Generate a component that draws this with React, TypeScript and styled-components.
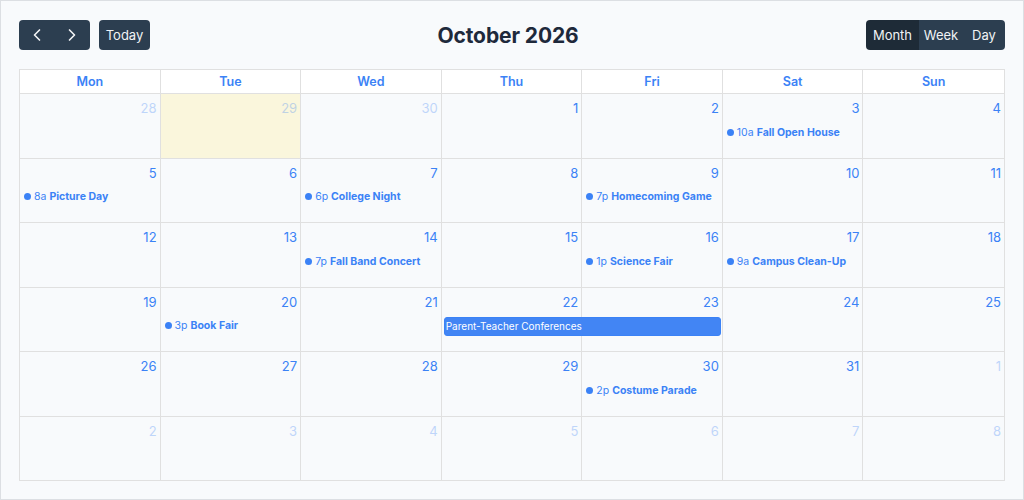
import styled, { createGlobalStyle } from 'styled-components';
import { ChevronLeft, ChevronRight } from 'lucide-react';

type CalEvent = {
  week: number;
  day: number;
  span?: number;
  time?: string;
  title: string;
};

const days = ['Mon', 'Tue', 'Wed', 'Thu', 'Fri', 'Sat', 'Sun'];

// first cell is Mon Sep 28 2026
const weeks: { n: number; other: boolean }[][] = Array.from({ length: 6 }, (_, w) =>
  Array.from({ length: 7 }, (_, d) => {
    const idx = w * 7 + d - 3;
    if (idx < 0) return { n: 28 + w * 7 + d, other: true };
    if (idx >= 31) return { n: idx - 30, other: true };
    return { n: idx + 1, other: false };
  })
);

const events: CalEvent[] = [
  { week: 0, day: 5, time: '10a', title: 'Fall Open House' },
  { week: 1, day: 0, time: '8a', title: 'Picture Day' },
  { week: 1, day: 2, time: '6p', title: 'College Night' },
  { week: 1, day: 4, time: '7p', title: 'Homecoming Game' },
  { week: 2, day: 2, time: '7p', title: 'Fall Band Concert' },
  { week: 2, day: 4, time: '1p', title: 'Science Fair' },
  { week: 2, day: 5, time: '9a', title: 'Campus Clean-Up' },
  { week: 3, day: 1, time: '3p', title: 'Book Fair' },
  { week: 3, day: 3, span: 2, title: 'Parent-Teacher Conferences' },
  { week: 4, day: 4, time: '2p', title: 'Costume Parade' },
];

const GlobalStyle = createGlobalStyle`
  html, body {
    margin: 0;
    padding: 0;
    background: #ffffff;
  }
  body {
    font-family: Inter, "Liberation Sans", sans-serif;
  }
`;

const App = () => {
  return (
    <>
      <GlobalStyle />
      <Page>
        <Toolbar>
          <ToolGroup>
            <ButtonGroup>
              <NavButton aria-label="prev">
                <ChevronLeft size={20} strokeWidth={2} />
              </NavButton>
              <NavButton aria-label="next">
                <ChevronRight size={20} strokeWidth={2} />
              </NavButton>
            </ButtonGroup>
            <TextButton>Today</TextButton>
          </ToolGroup>
          <Title>October 2026</Title>
          <ButtonGroup>
            <ViewButton $active $w={53}>Month</ViewButton>
            <ViewButton $w={44}>Week</ViewButton>
            <ViewButton $w={42}>Day</ViewButton>
          </ButtonGroup>
        </Toolbar>

        <Table>
          <HeaderRow>
            {days.map((d) => (
              <HeaderCell key={d}>{d}</HeaderCell>
            ))}
          </HeaderRow>
          {weeks.map((week, w) => (
            <WeekRow key={w}>
              {week.map((cell, d) => (
                <DayCell key={d} $col={d + 1} $today={w === 0 && d === 1}>
                  <DayNumber $other={cell.other}>{cell.n}</DayNumber>
                </DayCell>
              ))}
              {events
                .filter((e) => e.week === w)
                .map((e) =>
                  e.span ? (
                    <BlockEvent key={e.title} $col={e.day + 1} $span={e.span}>
                      {e.title}
                    </BlockEvent>
                  ) : (
                    <DotEvent key={e.title} $col={e.day + 1}>
                      <Dot />
                      <EventTime>{e.time}</EventTime>
                      <EventTitle>{e.title}</EventTitle>
                    </DotEvent>
                  )
                )}
            </WeekRow>
          ))}
        </Table>
      </Page>
    </>
  );
};

const Page = styled.div`
  box-sizing: border-box;
  width: 1024px;
  height: 500px;
  border: 1px solid #dcdfe3;
  background: #f8fafc;
  padding: 19px 18px 18px;
  display: flex;
  flex-direction: column;
  gap: 19px;
`;

const Toolbar = styled.div`
  display: flex;
  align-items: center;
  justify-content: space-between;
  height: 30px;
`;

const ToolGroup = styled.div`
  display: flex;
  align-items: center;
  gap: 9px;
`;

const ButtonGroup = styled.div`
  display: flex;
  border-radius: 4px;
  overflow: hidden;
  height: 30px;
`;

const BaseButton = styled.button`
  border: none;
  margin: 0;
  height: 30px;
  background: #2c3e50;
  color: #f1f3f5;
  font-family: Inter, "Liberation Sans", sans-serif;
  font-size: 13px;
  display: flex;
  align-items: center;
  justify-content: center;
  cursor: pointer;
`;

const NavButton = styled(BaseButton)`
  width: 35.5px;
  padding: 0;
`;

const TextButton = styled(BaseButton)`
  width: 51px;
  border-radius: 4px;
  padding: 0;
`;

const ViewButton = styled(BaseButton)<{ $active?: boolean; $w: number }>`
  width: ${(p) => p.$w}px;
  padding: 0;
  background: ${(p) => (p.$active ? '#1e2b37' : '#2c3e50')};
`;

const Title = styled.h2`
  margin: 0;
  font-size: 21px;
  font-weight: 700;
  color: #1e293b;
  letter-spacing: -0.1px;
`;

const Table = styled.div`
  display: flex;
  flex-direction: column;
  border: 1px solid #e0e0e0;
  height: 412px;
  box-sizing: border-box;
`;

const HeaderRow = styled.div`
  display: grid;
  grid-template-columns: repeat(7, 1fr);
  height: 23px;
  background: #ffffff;
  border-bottom: 1px solid #e0e0e0;
`;

const HeaderCell = styled.div`
  display: flex;
  align-items: center;
  justify-content: center;
  font-size: 12.5px;
  font-weight: 600;
  color: #3b82f6;
  border-right: 1px solid #e0e0e0;

  &:last-child {
    border-right: none;
  }
`;

const WeekRow = styled.div`
  flex: 1;
  display: grid;
  grid-template-columns: repeat(7, 1fr);
  grid-template-rows: 29px auto 1fr;
  border-bottom: 1px solid #e0e0e0;

  &:last-child {
    border-bottom: none;
  }
`;

const DayCell = styled.div<{ $col: number; $today?: boolean }>`
  grid-column: ${(p) => p.$col};
  grid-row: 1 / -1;
  background: ${(p) => (p.$today ? '#faf6dc' : 'transparent')};
  border-right: 1px solid #e0e0e0;
  display: flex;
  justify-content: flex-end;
  align-items: flex-start;

  &:nth-child(7) {
    border-right: none;
  }
`;

const DayNumber = styled.span<{ $other?: boolean }>`
  padding: 4px 3px 0 0;
  line-height: 20px;
  font-size: 13px;
  color: #3b82f6;
  opacity: ${(p) => (p.$other ? 0.3 : 1)};
`;

const DotEvent = styled.div<{ $col: number }>`
  grid-column: ${(p) => p.$col};
  grid-row: 2;
  display: flex;
  align-items: center;
  height: 18px;
  padding-left: 4px;
  font-size: 10.5px;
  color: #3b82f6;
  white-space: nowrap;
  z-index: 1;
`;

const Dot = styled.span`
  width: 7px;
  height: 7px;
  border-radius: 50%;
  background: #3b82f6;
  margin-right: 3px;
`;

const EventTime = styled.span`
  margin-right: 3px;
`;

const EventTitle = styled.span`
  font-weight: 700;
`;

const BlockEvent = styled.div<{ $col: number; $span: number }>`
  grid-column: ${(p) => p.$col} / span ${(p) => p.$span};
  grid-row: 2;
  margin: 0 2px;
  height: 19px;
  display: flex;
  align-items: center;
  padding-left: 1px;
  border-radius: 3px;
  background: #4285f4;
  border: 1px solid #3b82f6;
  box-sizing: border-box;
  color: #ffffff;
  font-size: 10px;
  white-space: nowrap;
  z-index: 1;
`;

export default App;
